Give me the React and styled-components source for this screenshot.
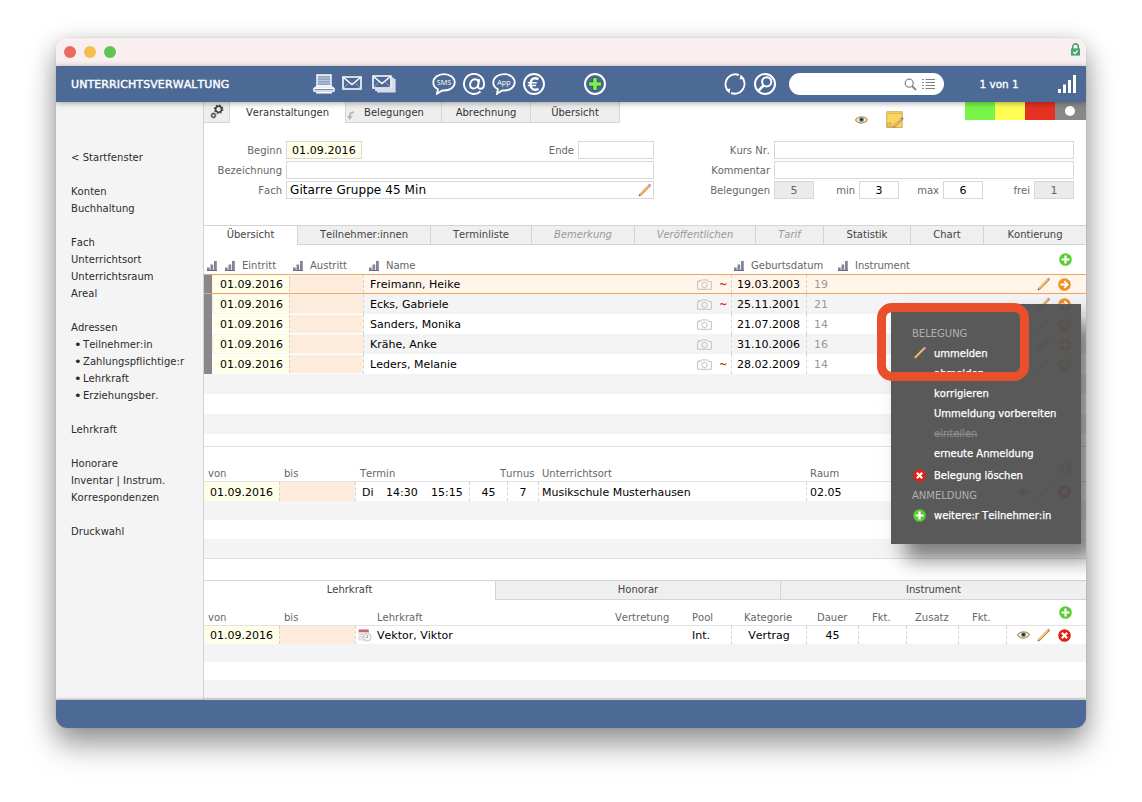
import React from 'react'
import styled, { createGlobalStyle, css } from 'styled-components'

const GlobalStyle = createGlobalStyle`
  * {
    box-sizing: border-box;
  }
  body {
    margin: 0;
    background: #fff;
    overflow: hidden;
    font-family: Verdana, 'DejaVu Sans', sans-serif;
    font-size: 10px;
    font-kerning: none;
    color: #333;
  }
  svg {
    display: block;
    flex: none;
  }
`

const Desktop = styled.div`
  height: 802px;
  padding: 38px 56px;
`

const Frame = styled.div`
  width: 1030px;
  height: 690px;
  border-radius: 11px;
  box-shadow: 0 0 1px rgba(0, 0, 0, 0.35), 0 4px 24px rgba(0, 0, 0, 0.18),
    0 18px 30px rgba(0, 0, 0, 0.34);
`

const Window = styled.div`
  position: relative;
  display: flex;
  flex-direction: column;
  height: 100%;
  border-radius: 11px;
  overflow: hidden;
  background: #fff;
`

const TitleBar = styled.div`
  display: flex;
  align-items: center;
  gap: 8px;
  height: 28px;
  padding: 0 5px 0 8px;
  background: #f9eff0;
  svg {
    margin: -5px 0 0 auto;
  }
`

const Light = styled.span`
  width: 12px;
  height: 12px;
  border-radius: 50%;
  background: ${(p) => p.color};
`

const Toolbar = styled.header`
  position: relative;
  z-index: 1;
  display: flex;
  align-items: center;
  height: 36px;
  padding: 0 9px 0 15px;
  background: #4d6a96;
  color: #fff;
  box-shadow: 0 1px 6px rgba(0, 0, 0, 0.35);
`

const AppTitle = styled.h1`
  width: 242px;
  margin: 0;
  font-size: 11px;
  font-weight: normal;
  letter-spacing: 0.1px;
  -webkit-text-stroke: 0.4px #fff;
`

const IconGroup = styled.div`
  display: flex;
  align-items: center;
  gap: ${(p) => p.gap}px;
  margin-right: ${(p) => p.after}px;
`

const Search = styled.div`
  display: flex;
  align-items: center;
  justify-content: flex-end;
  gap: 5px;
  width: 156px;
  height: 22px;
  padding-right: 9px;
  border-radius: 11px;
  background: #fff;
`

const Counter = styled.span`
  width: 114px;
  text-align: center;
  padding-right: 4px;
  font-size: 10.5px;
  -webkit-text-stroke: 0.3px #fff;
`

const Body = styled.div`
  display: flex;
  height: 598px;
`

const Sidebar = styled.nav`
  display: flex;
  flex-direction: column;
  gap: 17px;
  width: 148px;
  padding: 47px 0 0 15px;
  border-right: 1px solid #d2d2d2;
  background: #f4f4f4;
`

const NavItem = styled.div`
  display: flex;
  height: 17px;
  line-height: 17px;
  letter-spacing: 0.04px;
  white-space: nowrap;
  color: #2b2b2b;
  ${(p) =>
    p.$sub &&
    css`
      padding-left: 3px;
      &::before {
        content: '•';
        width: 9px;
        font-size: 13px;
      }
    `}
`

const Main = styled.main`
  width: 882px;
`

const TopBar = styled.div`
  display: flex;
  align-items: flex-start;
  height: 39px;
`

const TopTab = styled.div`
  display: flex;
  align-items: center;
  justify-content: center;
  width: ${(p) => p.w}px;
  height: 21px;
  border-right: 1px solid #d6d6d6;
  color: #333;
  ${(p) =>
    !p.$active &&
    css`
      background: #eee;
      border-bottom: 1px solid #d6d6d6;
    `}
  svg {
    margin: 7px 9px 0 -16px;
  }
  svg.gear {
    margin: -1px 0 0;
  }
`

const StatusIcons = styled.div`
  display: flex;
  align-items: center;
  gap: 18px;
  margin: 9px 61px 0 auto;
`

const Flag = styled.div`
  display: flex;
  align-items: center;
  justify-content: center;
  width: ${(p) => p.w || 30}px;
  height: 18px;
  padding-right: 1px;
  background: ${(p) => p.color};
  &::after {
    content: '';
    width: ${(p) => (p.$dot ? 10 : 0)}px;
    height: 10px;
    border-radius: 50%;
    background: #fff;
  }
`

const Form = styled.div`
  display: flex;
  flex-direction: column;
  gap: 2px;
  height: 84px;
`

const FormRow = styled.div`
  display: flex;
  height: 18px;
`

const Label = styled.label`
  width: ${(p) => p.w}px;
  padding-right: 4px;
  line-height: 20px;
  text-align: right;
  color: #666;
`

const Field = styled.div`
  display: flex;
  align-items: center;
  justify-content: ${(p) => (p.$center ? 'center' : 'space-between')};
  width: ${(p) => p.w}px;
  padding: 0 1px 0 ${(p) => (p.$center ? 1 : p.pad || 3)}px;
  border: 1px solid #d8d8d8;
  background: ${(p) => p.bg || '#fff'};
  font-size: ${(p) => p.size || 11}px;
  letter-spacing: 0.08px;
  color: ${(p) => p.color || '#000'};
`

const Tabs = styled.div`
  display: grid;
  grid-template-columns: ${(p) => p.cols};
  height: 20px;
  border-top: 1px solid #d4d4d4;
`

const Tab = styled.div`
  line-height: 18px;
  text-align: center;
  color: #444;
  ${(p) =>
    !p.$active &&
    css`
      border-left: 1px solid #d4d4d4;
      border-bottom: 1px solid #d4d4d4;
      background: #efefef;
    `}
  ${(p) =>
    p.$muted &&
    css`
      color: #999;
      font-style: italic;
    `}
`

const TableHead = styled.div`
  display: grid;
  grid-template-columns: ${(p) => p.cols};
  align-items: end;
  height: ${(p) => p.h}px;
  border-bottom: 1px solid ${(p) => p.line || '#e2e2e2'};
`

const HeadCell = styled.div`
  display: flex;
  align-items: center;
  gap: 7px;
  height: ${(p) => p.h || 15}px;
  padding-left: ${(p) => p.pad ?? 4}px;
  white-space: nowrap;
  color: #666;
`

const SortCell = styled(HeadCell).attrs({ h: 17, pad: 3 })``

const HeadAction = styled.div`
  align-self: end;
  padding: 0 0 ${(p) => p.lift}px 3.5px;
`

const Row = styled.div`
  display: grid;
  grid-template-columns: ${(p) => p.cols};
  height: ${(p) => p.h}px;
  background: ${(p) => (p.$odd ? '#f4f4f4' : '#fff')};
`

const PersonRow = styled(Row)`
  ${(p) =>
    p.$selected &&
    css`
      background: #fff5ea;
      border-bottom: 1px solid #f0a45c;
    `}
`

const Cell = styled.div`
  display: flex;
  align-items: center;
  min-width: 0;
  padding-left: ${(p) => p.pad ?? 0}px;
  padding-top: ${(p) => p.$drop || 0}px;
  font-size: 11px;
  white-space: nowrap;
  color: ${(p) => p.color || '#000'};
  ${(p) => p.$center && 'justify-content: center;'}
  ${(p) => p.$dash && 'border-left: 1px dashed #d3d3d3;'}
`

const Mark = styled(Cell)`
  color: #d4301c;
  font-weight: bold;
  font-size: 10px;
`

const Strip = styled.div`
  background: #888;
`

const DateCell = styled(Cell)`
  background: #ffffe9;
  ${(p) =>
    p.$inset &&
    css`
      margin: 1px 0 1px 2px;
    `}
`

const EndCell = styled(Cell)`
  border-left: 1px dashed #d8cfc6;
  background: #fdecdc;
  ${(p) => p.$inset && 'margin: 1px 0;'}
`

const Times = styled.span`
  display: grid;
  grid-template-columns: 24px 45px auto;
`

const Actions = styled(Cell)`
  justify-content: flex-end;
  gap: 7px;
  padding-right: 15px;
`

const Filler = styled.div`
  height: ${(p) => p.h}px;
  background: repeating-linear-gradient(
    #f4f4f4 0 ${(p) => p.row}px,
    #fff ${(p) => p.row}px ${(p) => p.row * 2}px
  );
  border-bottom: 1px solid #e0e0e0;
`

const Gap = styled.div`
  height: ${(p) => p.h}px;
`

const StatusBar = styled.footer`
  height: 28px;
  background: #4d6a96;
  box-shadow: 0 0 3px rgba(0, 0, 0, 0.5);
  z-index: 1;
`

const Menu = styled.div`
  position: absolute;
  z-index: 2;
  left: 835px;
  top: 266px;
  width: 190px;
  height: 240px;
  padding: 19px 0 0 21px;
  background: rgba(80, 80, 80, 0.95);
  box-shadow: 14px 15px 20px rgba(0, 0, 0, 0.5);
`

const MenuTitle = styled.div`
  height: 20px;
  line-height: 22px;
  color: #b0b0b0;
`

const MenuItem = styled.div`
  display: grid;
  grid-template-columns: 22px auto;
  align-items: center;
  height: 20px;
  margin-top: ${(p) => p.$space || 0}px;
  color: #fff;
  -webkit-text-stroke: 0.25px currentColor;
  svg {
    margin-left: 1px;
  }
  span {
    grid-column: 2;
  }
  ${(p) =>
    p.$disabled &&
    css`
      color: #888;
      text-decoration: line-through;
    `}
`

// highlight ring around the first menu entry
const Highlight = styled.div`
  position: absolute;
  z-index: 3;
  left: 821px;
  top: 265px;
  width: 152px;
  height: 78px;
  border: 9px solid #e8502c;
  border-radius: 15px;
`

const Lock = () => (
  <svg width="11" height="13" viewBox="0 0 11 13">
    <path d="M2.7 6V3.7a2.8 2.8 0 0 1 5.6 0V6" fill="none" stroke="#4aa574" strokeWidth="1.6" />
    <rect x="1" y="5.4" width="9" height="7.2" fill="#4aa574" />
    <path d="M3.2 9l1.7 1.6L7.8 7.4" fill="none" stroke="#fff" strokeWidth="1.2" />
  </svg>
)

const Printer = () => (
  <svg width="22" height="20" viewBox="0 0 22 20">
    <path d="M4 1h14v11H4z" fill="#8fa3c1" stroke="#fff" strokeWidth="1.4" />
    <path d="M5 4h12M5 6.5h12M5 9h12" stroke="#b9c5d8" />
    <path d="M3.5 12h15l2.5 2.5H1z" fill="#dfe6f0" stroke="#fff" />
    <path d="M1 14.5h20V17H1z" fill="#4d6a96" stroke="#fff" strokeWidth="1.4" />
    <path d="M3 18.8h16" stroke="#fff" strokeWidth="1.4" />
  </svg>
)

const MailIcon = styled.svg`
  margin: -3px 2px 0 -1px;
`

const Mail = () => (
  <MailIcon width="20" height="14" viewBox="0 0 20 14">
    <path d="M1 1h18v12H1z" fill="none" stroke="#fff" strokeWidth="1.6" />
    <path d="M1.500 1.500L10 8.500l8.500-7" fill="none" stroke="#fff" strokeWidth="1.500" />
    <path d="M1.500 12.500l5.500-6M18.500 12.500l-5.500-6" stroke="#a9b8d0" strokeWidth="0.800" />
  </MailIcon>
)

const Mails = () => (
  <svg width="24" height="18" viewBox="0 0 24 18">
    <path d="M5 16.500h17.500V4M3 14.800h17.800V2.500" fill="none" stroke="#d5ddea" strokeWidth="2.200" />
    <path d="M1 1h18v12H1z" fill="#4d6a96" stroke="#fff" strokeWidth="1.600" />
    <path d="M1.500 1.500L10 8.500l8.500-7" fill="none" stroke="#fff" strokeWidth="1.500" />
    <path d="M1.500 12.500l5.500-6M18.500 12.500l-5.500-6" stroke="#a9b8d0" strokeWidth="0.800" />
  </svg>
)

const Bubble = ({ label }) => (
  <svg width="24" height="22" viewBox="0 0 24 22">
    <path
      d="M12 1.200C6 1.200 1.300 4.800 1.300 9.400c0 3 1.800 5.300 4.600 6.800L5 20.700l5.200-3.300c.6.100 1.200.1 1.800.1 6 0 10.700-3.500 10.700-8.100S18 1.200 12 1.200z"
      fill="none"
      stroke="#fff"
      strokeWidth="1.800"
    />
    <text x="12" y="12" textAnchor="middle" fontSize="7.2" fontFamily="Open Sans, sans-serif" fill="#fff">
      {label}
    </text>
  </svg>
)

const At = () => (
  <svg width="22" height="22" viewBox="0 0 22 22">
    <path
      d="M17.500 18.500A10 10 0 1 1 21 11c0 3-1.500 4.800-3.500 4.800-1.900 0-2.600-1.200-2.300-3l1-6.600M15.400 10.200c.2-2.300-1.100-3.900-3.300-3.900-2.900 0-5 2.500-5 5.300 0 2.300 1.300 3.900 3.300 3.900 2.700 0 4.800-2.500 5-5.300z"
      fill="none"
      stroke="#fff"
      strokeWidth="1.900"
    />
  </svg>
)

const Euro = () => (
  <svg width="22" height="22" viewBox="0 0 22 22">
    <circle cx="11" cy="11" r="10" fill="none" stroke="#fff" strokeWidth="1.9" />
    <path d="M15.5 6.300C11.500 3.800 7.500 6 7.500 11s4 7.200 8 4.700" fill="none" stroke="#fff" strokeWidth="2.300" />
    <path d="M4.800 9.700h9M4.800 12.400h8.300" stroke="#fff" strokeWidth="1.500" />
  </svg>
)

const AddCircle = () => (
  <svg width="22" height="22" viewBox="0 0 22 22">
    <circle cx="11" cy="11" r="10" fill="none" stroke="#fff" strokeWidth="2" />
    <path d="M11 4.500v13M4.500 11h13" stroke="#2c5a3c" strokeWidth="5" />
    <path d="M11 5v12M5 11h12" stroke="#7df04a" strokeWidth="3.6" />
  </svg>
)

const Refresh = () => (
  <svg width="22" height="22" viewBox="0 0 22 22" fill="none" stroke="#fff" strokeWidth="2">
    <path d="M3.300 16.800A9.800 9.800 0 0 1 14.800 2M18.700 5.200A9.800 9.800 0 0 1 7.200 20" />
    <path d="M1.500 16.500l4.800-1-.8 5zM20.500 5.500l-4.800 1 .8-5z" fill="#fff" stroke="none" />
  </svg>
)

const SearchCircle = () => (
  <svg width="22" height="22" viewBox="0 0 22 22" fill="none" stroke="#fff">
    <circle cx="11" cy="11" r="10" strokeWidth="2" />
    <circle cx="12.7" cy="8.8" r="4.6" strokeWidth="2" />
    <path d="M9.5 12.5l-4.900 5.100" strokeWidth="2.6" />
  </svg>
)

const Loupe = () => (
  <svg width="13" height="13" viewBox="0 0 13 13" fill="none" stroke="#8a8a8a">
    <circle cx="5.2" cy="5.2" r="4" strokeWidth="1.3" />
    <path d="M8 8l4 4" strokeWidth="1.9" />
  </svg>
)

const List = () => (
  <svg width="13" height="11" viewBox="0 0 13 11" stroke="#808080" strokeWidth="1.1">
    <path d="M0 .5h1.700M0 3.500h1.700M0 6.500h1.700M0 9.500h1.700M3.500.5H13M3.500 3.500H13M3.500 6.500H13M3.500 9.500H13" />
  </svg>
)

const Signal = () => (
  <svg width="19" height="18" viewBox="0 0 19 18" fill="#fff">
    <path d="M0 14h3v4H0zM5 9.500h3V18H5zM10 5h3v13h-3zM15 0h3v18h-3z" />
  </svg>
)

const Gears = () => (
  <svg className="gear" width="14" height="15" viewBox="0 0 14 15" fill="none" stroke="#3c3c3c">
    <circle cx="8.6" cy="5.3" r="3" strokeWidth="1.6" />
    <circle cx="8.6" cy="5.3" r="4.2" strokeWidth="1.2" strokeDasharray="1.6 1.7" />
    <circle cx="3.5" cy="11.5" r="1.8" strokeWidth="1.2" />
    <circle cx="3.5" cy="11.5" r="2.6" strokeWidth="0.7" strokeDasharray="1 1" />
  </svg>
)

const BackArrow = () => (
  <svg width="8" height="10" viewBox="0 0 8 10">
    <path d="M7 1.500C4 1 2.800 2.500 2.800 5.500" fill="none" stroke="#b4b4b4" strokeWidth="1.8" />
    <path d="M0 5h5.600L2.800 9z" fill="#b4b4b4" />
  </svg>
)

const Pencil = () => (
  <svg width="14" height="14" viewBox="0 0 14 14">
    <path d="M2 12l9.500-9.700" stroke="#b07a3c" strokeWidth="2.5" />
    <path d="M1.800 11.800l9.300-9.500" stroke="#fac878" strokeWidth="1.500" />
    <path d="M11 2.800l1.400-1.400" stroke="#b796c4" strokeWidth="2.500" />
    <path d="M.6 13.400l.6-2.400 1.800 1.800z" fill="#8d6c48" />
  </svg>
)

const Eye = () => (
  <svg width="13" height="10" viewBox="0 0 13 10">
    <path d="M.5 5C3 .9 9.500.6 12.500 4.800 9.500 9.200 3 9.100.5 5z" fill="#f3efe6" stroke="#c0933f" strokeWidth="1.1" />
    <circle cx="6.5" cy="4.6" r="2.6" fill="#7b9bb0" />
    <circle cx="6.5" cy="4.6" r="1.4" fill="#1d2a33" />
  </svg>
)

const Note = () => (
  <svg width="18" height="18" viewBox="0 0 18 18">
    <path d="M.7.7h15.500v15.700H.7z" fill="#f7d563" stroke="#c79c48" strokeWidth="0.8" />
    <path d="M1 2.500h15" stroke="#e5b84a" />
    <path d="M1.500 12H5v3.500H1.500z" fill="#f2c64f" stroke="#cfa240" strokeWidth="0.7" />
    <path d="M7 16.500L15.800 8" stroke="#a57136" strokeWidth="2.4" />
    <path d="M7.300 16l8.200-8" stroke="#f3bd79" strokeWidth="1.4" />
    <path d="M15.400 8.400L17 6.900" stroke="#8c86bd" strokeWidth="2.4" />
  </svg>
)

const SortBars = () => (
  <svg width="10" height="10" viewBox="0 0 10 10" fill="#808495">
    <path d="M0 6.500h2.700V10H0zM3.500 3.500h2.700V10H3.500zM7 0h2.800v10H7z" />
    <path d="M0 9.500h10" stroke="#666a7c" />
  </svg>
)

const Camera = () => (
  <svg width="15" height="11" viewBox="0 0 15 11" fill="none" stroke="#c3c3c3">
    <path d="M.6 2.500h3L4.800.9h5.400l1.200 1.600h3v7.800H.6z" />
    <circle cx="7.5" cy="6" r="2.7" />
    <path d="M1.500 1.300h1.700" />
  </svg>
)

const Dot = ({ color, children }) => (
  <svg width="13" height="13" viewBox="0 0 13 13" fill="none" stroke="#fff" strokeWidth="2.2">
    <circle cx="6.5" cy="6.5" r="6.3" fill={color} stroke="none" />
    {children}
  </svg>
)

const Plus = () => (
  <Dot color="#58cc32">
    <path d="M6.500 2.500v8M2.500 6.500h8" />
  </Dot>
)

const Remove = () => (
  <Dot color="#e02214">
    <path d="M3.800 3.800l5.400 5.400M9.200 3.800L3.800 9.200" />
  </Dot>
)

const Go = () => (
  <Dot color="#ee9128">
    <path d="M2.500 6.500h7M6.300 3.200l3.300 3.300-3.300 3.300" strokeWidth="1.8" />
  </Dot>
)

const Calendar = () => (
  <svg width="14" height="13" viewBox="0 0 14 13">
    <path d="M1 1h9.500v10H1z" fill="#eee" stroke="#d0d0d0" strokeWidth="0.7" />
    <path d="M.7.5h10v2.700H.7z" fill="#cf6666" />
    <path d="M2.500 5.500h3M2.500 8h3" stroke="#ccc" />
    <circle cx="9.3" cy="8.2" r="3.9" fill="#f2f2f2" stroke="#c6c6c6" />
    <path d="M9.500 6v2.500h-2" fill="none" stroke="#999" strokeWidth="0.8" />
  </svg>
)

const nav = [
  ['< Startfenster'],
  ['Konten', 'Buchhaltung'],
  ['Fach', 'Unterrichtsort', 'Unterrichtsraum', 'Areal'],
  ['Adressen', '*Teilnehmer:in', '*Zahlungspflichtige:r', '*Lehrkraft', '*Erziehungsber.'],
  ['Lehrkraft'],
  ['Honorare', 'Inventar | Instrum.', 'Korrespondenzen'],
  ['Druckwahl']
]

const people = [
  { name: 'Freimann, Heike', born: '19.03.2003', age: 19, mark: true },
  { name: 'Ecks, Gabriele', born: '25.11.2001', age: 21, mark: true },
  { name: 'Sanders, Monika', born: '21.07.2008', age: 14 },
  { name: 'Krähe, Anke', born: '31.10.2006', age: 16 },
  { name: 'Leders, Melanie', born: '28.02.2009', age: 14, mark: true }
]

const detailTabs = [
  { label: 'Übersicht', active: true },
  { label: 'Teilnehmer:innen' },
  { label: 'Terminliste' },
  { label: 'Bemerkung', muted: true },
  { label: 'Veröffentlichen', muted: true },
  { label: 'Tarif', muted: true },
  { label: 'Statistik' },
  { label: 'Chart' },
  { label: 'Kontierung' }
]

const personCols = '8px 77px 74px 334px 22px 12px 75px 230px 50px'
const dateCols = '75px 76px 114px 38px 31px 268px 85px 195px'
const staffCols = '75px 76px 18px 309px 49px 75px 52px 48px 52px 48px 80px'

const Header = () => (
  <Toolbar>
    <AppTitle>UNTERRICHTSVERWALTUNG</AppTitle>
    <IconGroup gap={8} after={36}>
      <Printer />
      <Mail />
      <Mails />
    </IconGroup>
    <IconGroup gap={7} after={39}>
      <Bubble label="SMS" />
      <At />
      <Bubble label="App" />
      <Euro />
    </IconGroup>
    <IconGroup gap={0} after={118}>
      <AddCircle />
    </IconGroup>
    <IconGroup gap={8} after={13}>
      <Refresh />
      <SearchCircle />
    </IconGroup>
    <Search>
      <Loupe />
      <List />
    </Search>
    <Counter>1 von 1</Counter>
    <Signal />
  </Toolbar>
)

const CourseForm = () => (
  <Form>
    <FormRow>
      <Label w={82}>Beginn</Label>
      <Field w={76} pad={5} bg="#ffffe9">01.09.2016</Field>
      <Label w={216}>Ende</Label>
      <Field w={76} />
      <Label w={120}>Kurs Nr.</Label>
      <Field w={300} />
    </FormRow>
    <FormRow>
      <Label w={82}>Bezeichnung</Label>
      <Field w={368} />
      <Label w={120}>Kommentar</Label>
      <Field w={300} />
    </FormRow>
    <FormRow>
      <Label w={82}>Fach</Label>
      <Field w={368} size={12}>
        Gitarre Gruppe 45 Min
        <Pencil />
      </Field>
      <Label w={120}>Belegungen</Label>
      <Field w={40} $center bg="#ebebeb" color="#666">5</Field>
      <Label w={45}>min</Label>
      <Field w={40} $center>3</Field>
      <Label w={44}>max</Label>
      <Field w={40} $center>6</Field>
      <Label w={51}>frei</Label>
      <Field w={40} $center bg="#ebebeb" color="#666">1</Field>
    </FormRow>
  </Form>
)

const Participants = () => (
  <>
    <TableHead cols="18px 68px 76px 365px 104px 220px 31px" h={30} line="#f0a45c">
      <SortCell><SortBars /></SortCell>
      <SortCell><SortBars />Eintritt</SortCell>
      <SortCell><SortBars />Austritt</SortCell>
      <SortCell><SortBars />Name</SortCell>
      <SortCell><SortBars />Geburtsdatum</SortCell>
      <SortCell><SortBars />Instrument</SortCell>
      <HeadAction lift={8}><Plus /></HeadAction>
    </TableHead>
    {people.map((p, i) => (
      <PersonRow key={p.name} cols={personCols} h={i ? 20 : 19} $odd={i % 2 === 1} $selected={i === 0}>
        <Strip />
        <DateCell pad={6} $inset>01.09.2016</DateCell>
        <EndCell $inset />
        <Cell pad={6} $dash>{p.name}</Cell>
        <Cell><Camera /></Cell>
        <Mark>{p.mark && '~'}</Mark>
        <Cell pad={5} $dash>{p.born}</Cell>
        <Cell pad={7} $dash color="#999">{p.age}</Cell>
        <Actions>
          <Pencil />
          <Go />
        </Actions>
      </PersonRow>
    ))}
    <Filler h={73} row={20} />
  </>
)

const Schedule = () => (
  <>
    <TableHead cols="76px 76px 140px 42px 268px 249px 31px" h={35}>
      <HeadCell>von</HeadCell>
      <HeadCell>bis</HeadCell>
      <HeadCell>Termin</HeadCell>
      <HeadCell>Turnus</HeadCell>
      <HeadCell>Unterrichtsort</HeadCell>
      <HeadCell>Raum</HeadCell>
      <HeadAction lift={6}><Plus /></HeadAction>
    </TableHead>
    <Row cols={dateCols} h={19}>
      <DateCell pad={6} $drop={1}>01.09.2016</DateCell>
      <EndCell />
      <Cell pad={6} $drop={1} $dash>
        <Times>
          <span>Di</span>
          <span>14:30</span>
          <span>15:15</span>
        </Times>
      </Cell>
      <Cell $center $drop={1} $dash>45</Cell>
      <Cell $center $drop={1} $dash>7</Cell>
      <Cell pad={3} $drop={1} $dash>Musikschule Musterhausen</Cell>
      <Cell pad={3} $drop={1} $dash>02.05</Cell>
      <Actions>
        <Eye />
        <Pencil />
        <Remove />
      </Actions>
    </Row>
    <Filler h={58} row={19} />
  </>
)

const Staff = () => (
  <>
    <TableHead cols="76px 93px 238px 76px 53px 72px 55px 44px 57px 87px 31px" h={26}>
      <HeadCell>von</HeadCell>
      <HeadCell>bis</HeadCell>
      <HeadCell>Lehrkraft</HeadCell>
      <HeadCell>Vertretung</HeadCell>
      <HeadCell pad={5}>Pool</HeadCell>
      <HeadCell>Kategorie</HeadCell>
      <HeadCell pad={5}>Dauer</HeadCell>
      <HeadCell pad={5}>Fkt.</HeadCell>
      <HeadCell>Zusatz</HeadCell>
      <HeadCell>Fkt.</HeadCell>
      <HeadAction lift={6}><Plus /></HeadAction>
    </TableHead>
    <Row cols={staffCols} h={18}>
      <DateCell pad={6}>01.09.2016</DateCell>
      <EndCell />
      <Cell pad={2} $dash><Calendar /></Cell>
      <Cell pad={4}>Vektor, Viktor</Cell>
      <Cell pad={10}>Int.</Cell>
      <Cell $center $dash>Vertrag</Cell>
      <Cell $center $dash>45</Cell>
      <Cell $dash />
      <Cell $dash />
      <Cell $dash />
      <Actions $dash>
        <Eye />
        <Pencil />
        <Remove />
      </Actions>
    </Row>
    <Filler h={55} row={18} />
  </>
)

const ContextMenu = () => (
  <Menu>
    <MenuTitle>BELEGUNG</MenuTitle>
    <MenuItem><Pencil /><span>ummelden</span></MenuItem>
    <MenuItem><span>abmelden</span></MenuItem>
    <MenuItem><span>korrigieren</span></MenuItem>
    <MenuItem><span>Ummeldung vorbereiten</span></MenuItem>
    <MenuItem $disabled><span>einteilen</span></MenuItem>
    <MenuItem><span>erneute Anmeldung</span></MenuItem>
    <MenuItem $space={2}><Remove /><span>Belegung löschen</span></MenuItem>
    <MenuTitle>ANMELDUNG</MenuTitle>
    <MenuItem><Plus /><span>weitere:r Teilnehmer:in</span></MenuItem>
  </Menu>
)

const App = () => (
  <Desktop>
    <GlobalStyle />
    <Frame>
      <Window>
        <TitleBar>
          <Light color="#ec6a5e" />
          <Light color="#f4bf4f" />
          <Light color="#61c554" />
          <Lock />
        </TitleBar>
        <Header />
        <Body>
          <Sidebar>
            {nav.map((group) => (
              <div key={group[0]}>
                {group.map((item) => (
                  <NavItem key={item} $sub={item[0] === '*'}>
                    {item.replace('*', '')}
                  </NavItem>
                ))}
              </div>
            ))}
          </Sidebar>
          <Main>
            <TopBar>
              <TopTab w={26}><Gears /></TopTab>
              <TopTab w={116} $active>Veranstaltungen</TopTab>
              <TopTab w={96}><BackArrow />Belegungen</TopTab>
              <TopTab w={89}>Abrechnung</TopTab>
              <TopTab w={89}>Übersicht</TopTab>
              <StatusIcons>
                <Eye />
                <Note />
              </StatusIcons>
              <Flag color="#78f548" />
              <Flag color="#fffd54" />
              <Flag color="#e53122" />
              <Flag color="#888" w={31} $dot />
            </TopBar>
            <CourseForm />
            <Tabs cols="93px 133px 101px 103px 121px 68px 87px 73px 103px">
              {detailTabs.map((t) => (
                <Tab key={t.label} $active={t.active} $muted={t.muted}>
                  {t.label}
                </Tab>
              ))}
            </Tabs>
            <Participants />
            <Schedule />
            <Gap h={21} />
            <Tabs cols="291px 285px 306px">
              <Tab $active>Lehrkraft</Tab>
              <Tab>Honorar</Tab>
              <Tab>Instrument</Tab>
            </Tabs>
            <Staff />
          </Main>
        </Body>
        <StatusBar />
        <ContextMenu />
        <Highlight />
      </Window>
    </Frame>
  </Desktop>
)

export default App
